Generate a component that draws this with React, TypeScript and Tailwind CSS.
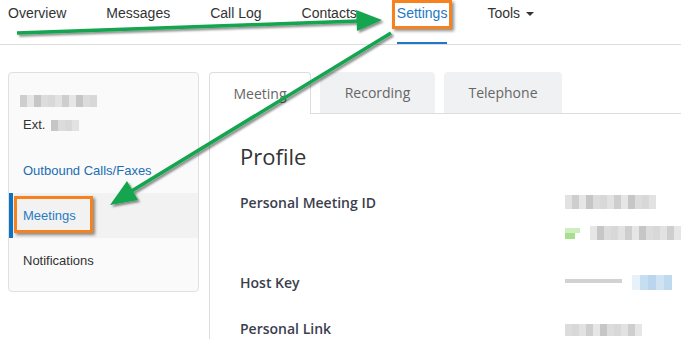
import React from 'react';

const navItems = ['Overview', 'Messages', 'Call Log', 'Contacts', 'Settings'];

const shades = ['bg-[#d8d8d8]', 'bg-[#e2e2e2]', 'bg-[#cecece]', 'bg-[#e6e6e6]', 'bg-[#c6c6c6]', 'bg-[#dcdcdc]'];

// pixelated placeholder for the blurred-out values in the screenshot
function Blur({cells, h = 'h-[12px]', cell = 'w-[7px]', seed = 0}: {cells: number; h?: string; cell?: string; seed?: number}) {
  return (
    <div className={`flex ${h}`}>
      {Array.from({length: cells}).map((_, i) => (
        <div key={i} className={`${cell} h-full ${shades[(i * 7 + seed) % shades.length]}`} />
      ))}
    </div>
  );
}

function Arrows() {
  return (
    <svg className="absolute left-0 top-0 pointer-events-none" width="681" height="344" viewBox="0 0 681 344">
      <defs>
        <filter id="sh" x="-10%" y="-10%" width="120%" height="130%">
          <feDropShadow dx="2" dy="2" stdDeviation="1.2" floodColor="#000" floodOpacity="0.45" />
        </filter>
      </defs>
      <g filter="url(#sh)" fill="#12a550" stroke="#12a550">
        <line x1="17" y1="33" x2="358" y2="21" strokeWidth="3.5" />
        <polygon points="382,20 356,10 357,31" strokeWidth="0" />
        <line x1="391" y1="33" x2="130" y2="192" strokeWidth="3.5" />
        <polygon points="110,205 138,200 127,181" strokeWidth="0" />
      </g>
    </svg>
  );
}

export default function App() {
  return (
    <div className="relative w-[681px] h-[344px] overflow-hidden bg-white">
      {/* Top nav */}
      <nav className="flex gap-10 pl-2 h-[45px] border-b border-[#dddddd] font-['Liberation_Sans',Arial,sans-serif] text-[14px]">
        {navItems.map(item => (
          <div
            key={item}
            className={
              item === 'Settings'
                ? 'h-[44px] pt-[3px] leading-[20px] text-[#1f78c4] border-b-2 border-[#1f78c4]'
                : 'h-[44px] pt-[3px] leading-[20px] text-[#333333]'
            }
          >
            {item}
          </div>
        ))}
        <div className="h-[44px] pt-[3px] leading-[20px] text-[#333333] flex items-start gap-[6px]">
          Tools
          <span className="mt-[9px] w-0 h-0 border-l-[4px] border-r-[4px] border-t-[4px] border-l-transparent border-r-transparent border-t-[#333333]" />
        </div>
      </nav>

      <div className="flex gap-[10px] pl-2 pt-[27px]">
        {/* Left card */}
        <aside className="w-[191px] h-[220px] shrink-0 rounded-[4px] border border-[#e0e0e0] bg-[#fafafa] pt-[18px] font-['Liberation_Sans',Arial,sans-serif] text-[13px]">
          <div className="h-[20px] pl-[11px] flex items-center">
            <Blur cells={11} seed={2} />
          </div>
          <div className="mt-[4px] h-[20px] pl-[14px] flex items-center gap-[6px] text-[#333333]">
            Ext.
            <Blur cells={4} h="h-[11px]" seed={4} />
          </div>
          <div className="mt-[13px] h-[45px] pl-[14px] flex items-center text-[#1a6db3]">Outbound Calls/Faxes</div>
          <div className="h-[45px] pl-[10px] flex items-center bg-[#f2f2f2] border-l-4 border-[#0b73c2] text-[#2a7cc2]">
            Meetings
          </div>
          <div className="h-[45px] pl-[14px] flex items-center text-[#333333]">Notifications</div>
        </aside>

        {/* Right panel */}
        <section className="flex-1 flex flex-col font-['Open_Sans',sans-serif]">
          <div className="flex items-end gap-[9px] border-b border-[#dddddd] h-[42px]">
            <div className="w-[102px] h-[42px] -mb-px bg-white border border-b-0 border-[#dddddd] rounded-t-[4px] flex items-center justify-center text-[14px] text-[#666666]">
              Meeting
            </div>
            <div className="w-[115px] h-[41px] bg-[#f0f1f3] rounded-t-[4px] flex items-center justify-center text-[14px] text-[#666666]">
              Recording
            </div>
            <div className="w-[118px] h-[41px] bg-[#f0f1f3] rounded-t-[4px] flex items-center justify-center text-[14px] text-[#666666]">
              Telephone
            </div>
          </div>
          <div className="flex-1 border-l border-[#dddddd] pl-[30px] pt-[27px]">
            <h1 className="text-[22px] leading-[30px] text-[#333333]">Profile</h1>
            <div className="mt-[22px] grid grid-cols-[325px_1fr] text-[14px] leading-[20px] font-semibold text-[#3b3e4e]">
              <div className="h-[80px]">Personal Meeting ID</div>
              <div className="h-[80px] pt-[2px]">
                <Blur cells={13} h="h-[14px]" seed={1} />
                <div className="mt-[17px] flex items-center gap-[10px]">
                  <div className="flex flex-col w-[15px] h-[11px]">
                    <div className="h-[5px] bg-[#cdeec0]" />
                    <div className="h-[6px] bg-[#a7df8f] w-[10px]" />
                  </div>
                  <Blur cells={14} h="h-[14px]" seed={3} />
                </div>
              </div>
              <div className="h-[46px]">Host Key</div>
              <div className="h-[46px] flex items-start gap-[10px] pt-[2px]">
                <div className="mt-[4px] w-[57px] h-[4px] bg-[#d2d2d2]" />
                <div className="flex h-[15px]">
                  <div className="w-[8px] bg-[#e6f1f9]" />
                  <div className="w-[8px] bg-[#c6def0]" />
                  <div className="w-[8px] bg-[#b9d6ee]" />
                  <div className="w-[8px] bg-[#cfe3f3]" />
                  <div className="w-[8px] bg-[#bfd9ee]" />
                </div>
              </div>
              <div>Personal Link</div>
              <div className="pt-[5px]">
                <Blur cells={11} h="h-[12px]" seed={5} />
              </div>
            </div>
          </div>
        </section>
      </div>

      {/* Annotation overlays */}
      <div className="absolute left-[392px] top-0 w-[60px] h-[29px] border-[3px] border-[#f5821f] shadow-[2px_2px_3px_rgba(0,0,0,0.45)]" />
      <div className="absolute left-[14px] top-[196px] w-[79px] h-[37px] border-[3px] border-[#f5821f] shadow-[2px_2px_3px_rgba(0,0,0,0.45)]" />
      <Arrows />
    </div>
  );
}
